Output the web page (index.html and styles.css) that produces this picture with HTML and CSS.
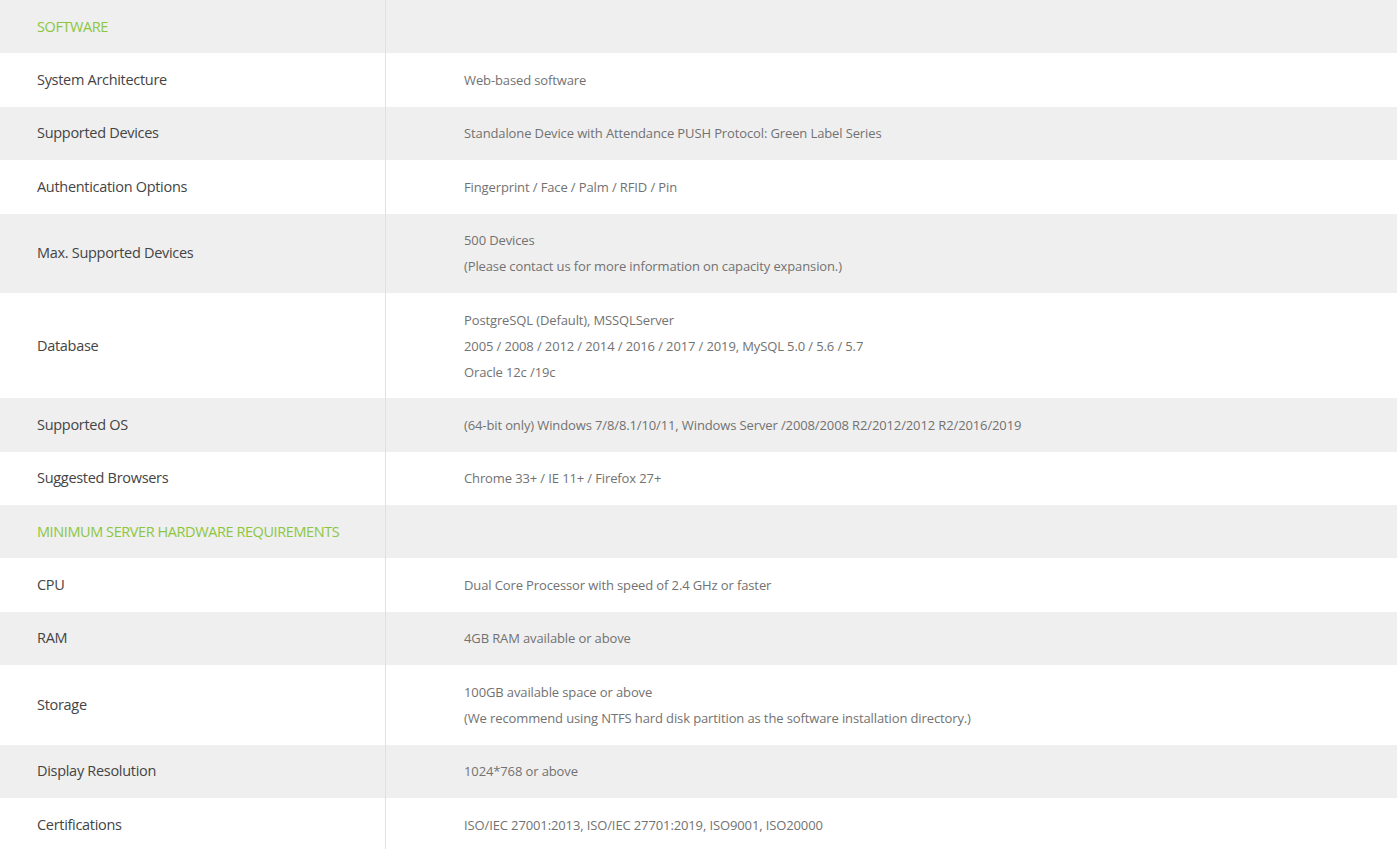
FILE: index.html
```html
<!DOCTYPE html>
<html lang="en">
<head>
<meta charset="utf-8">
<title>Specifications</title>
<link rel="stylesheet" href="styles.css">
</head>
<body>
<table class="spec">
  <tbody>
    <tr class="row gray section"><th class="label">SOFTWARE</th><td class="value"></td></tr>
    <tr class="row"><th class="label">System Architecture</th><td class="value">Web-based software</td></tr>
    <tr class="row gray"><th class="label">Supported Devices</th><td class="value">Standalone Device with Attendance PUSH Protocol: Green Label Series</td></tr>
    <tr class="row"><th class="label">Authentication Options</th><td class="value">Fingerprint / Face / Palm / RFID / Pin</td></tr>
    <tr class="row gray"><th class="label">Max. Supported Devices</th><td class="value">500 Devices<br>(Please contact us for more information on capacity expansion.)</td></tr>
    <tr class="row"><th class="label">Database</th><td class="value">PostgreSQL (Default), MSSQLServer<br>2005 / 2008 / 2012 / 2014 / 2016 / 2017 / 2019, MySQL 5.0 / 5.6 / 5.7<br>Oracle 12c /19c</td></tr>
    <tr class="row gray"><th class="label">Supported OS</th><td class="value">(64-bit only) Windows 7/8/8.1/10/11, Windows Server /2008/2008 R2/2012/2012 R2/2016/2019</td></tr>
    <tr class="row"><th class="label">Suggested Browsers</th><td class="value">Chrome 33+ / IE 11+ / Firefox 27+</td></tr>
    <tr class="row gray section"><th class="label">MINIMUM SERVER HARDWARE REQUIREMENTS</th><td class="value"></td></tr>
    <tr class="row"><th class="label">CPU</th><td class="value">Dual Core Processor with speed of 2.4 GHz or faster</td></tr>
    <tr class="row gray"><th class="label">RAM</th><td class="value">4GB RAM available or above</td></tr>
    <tr class="row"><th class="label">Storage</th><td class="value">100GB available space or above<br>(We recommend using NTFS hard disk partition as the software installation directory.)</td></tr>
    <tr class="row gray"><th class="label">Display Resolution</th><td class="value">1024*768 or above</td></tr>
    <tr class="row"><th class="label">Certifications</th><td class="value">ISO/IEC 27001:2013, ISO/IEC 27701:2019, ISO9001, ISO20000</td></tr>
  </tbody>
</table>
</body>
</html>
```

FILE: styles.css
```css
html, body {
  margin: 0;
  padding: 0;
  background: #ffffff;
}

body {
  font-family: "Open Sans", "Noto Sans", sans-serif;
}

.spec {
  width: 1397px;
  border-collapse: collapse;
  border-spacing: 0;
}

.row.gray {
  background: #efefef;
}

.label {
  width: 348px;
  padding: 13.7px 0 13.7px 37px;
  text-align: left;
  font-weight: 400;
  font-size: 14.5px;
  letter-spacing: -0.3px;
  line-height: 26px;
  color: #444444;
  border-right: 1px solid #e0e0e0;
  vertical-align: middle;
}

.section .label {
  color: #8cc63f;
  letter-spacing: -0.42px;
}

.value {
  padding: 13.7px 0 13.7px 78px;
  font-size: 13px;
  letter-spacing: -0.12px;
  line-height: 26px;
  color: #727272;
  vertical-align: middle;
}
```
